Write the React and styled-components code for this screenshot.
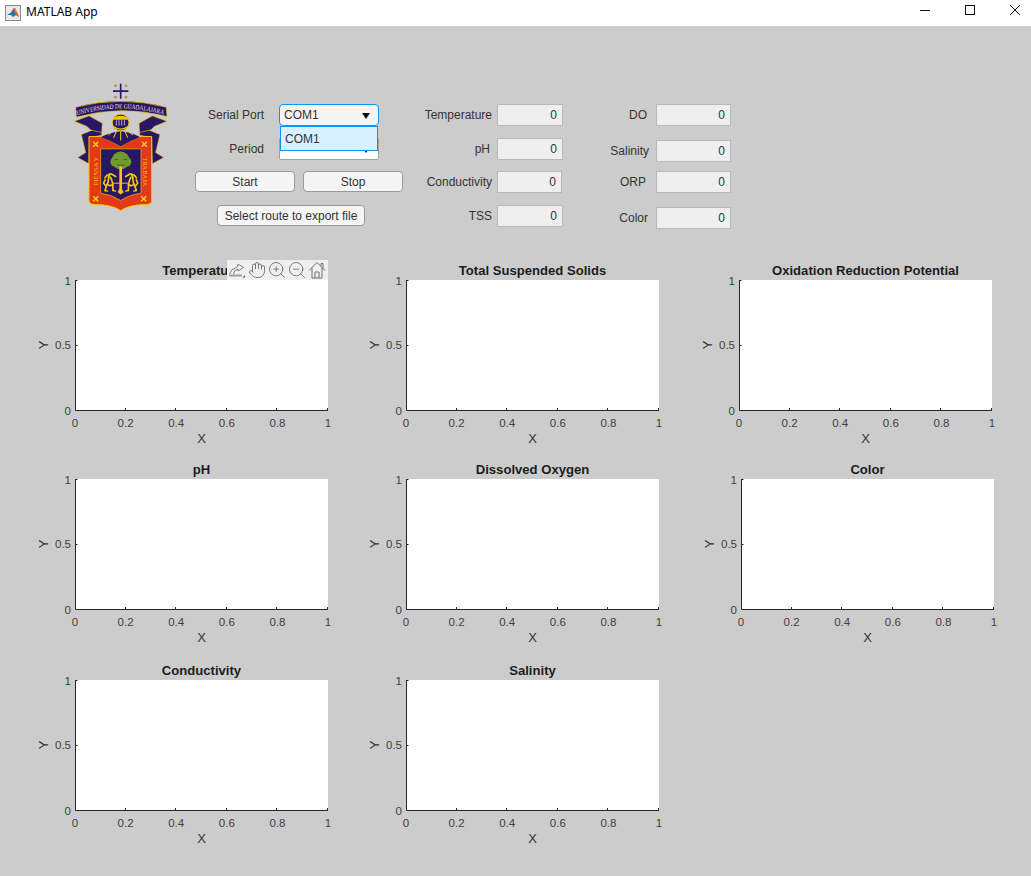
import styled, { createGlobalStyle } from "styled-components";
import { Hand, ZoomIn, ZoomOut } from "lucide-react";

const GlobalStyle = createGlobalStyle`
    html, body {
        margin: 0;
        padding: 0;
        background: #cccccc;
    }
    * {
        box-sizing: border-box;
    }
`;

const Window = styled.div`
    width: 1031px;
    height: 876px;
    overflow: hidden;
    display: flex;
    flex-direction: column;
    font-family: "Liberation Sans", Arial, sans-serif;
    font-size: 12px;
    color: #333333;
`;

const TitleBar = styled.div`
    height: 26px;
    flex: none;
    background: #ffffff;
    display: flex;
    align-items: center;
    padding-left: 5px;
`;

const AppName = styled.span`
    margin-left: 5px;
    font-family: "Noto Sans", sans-serif;
    font-size: 12px;
    color: #000000;
    margin-top: -3px;
`;

const WindowButtons = styled.div`
    margin-left: auto;
    margin-right: -6px;
    display: flex;
`;

const WindowButton = styled.div`
    width: 45px;
    height: 26px;
    display: flex;
    align-items: center;
    justify-content: center;
    padding-bottom: 6px;
`;

const Figure = styled.div`
    flex: 1;
    background: #cccccc;
    display: flex;
    flex-direction: column;
`;

const Header = styled.div`
    height: 234px;
    flex: none;
    padding: 57px 0 0 73px;
    display: flex;
    align-items: flex-start;
`;

const Logo = styled.svg`
    flex: none;
    width: 95px;
    height: 129px;
`;

const Controls = styled.div`
    width: 208px;
    margin: 21px 0 0 27px;
    display: flex;
    flex-direction: column;
`;

const SelectRow = styled.div`
    display: flex;
    align-items: center;
    height: 22px;
    margin-top: ${(p) => p.$top || 0}px;
`;

const ControlLabel = styled.span`
    width: 69px;
    margin-right: 15px;
    text-align: right;
`;

const SelectBox = styled.div`
    position: relative;
    width: 100px;
    height: 22px;
    padding-left: 4px;
    display: flex;
    align-items: center;
    background: ${(p) => (p.$open ? "#f5f5f5" : "#ffffff")};
    border: 1px solid ${(p) => (p.$open ? "#0a95f5" : "#a0a0a0")};
    border-radius: ${(p) => (p.$open ? "4px" : "0 0 2px 2px")};
    &::after {
        content: "";
        position: absolute;
        right: 8px;
        top: 8px;
        border-left: 4px solid transparent;
        border-right: 4px solid transparent;
        border-top: 6px solid #111111;
    }
`;

const DropList = styled.div`
    position: absolute;
    z-index: 2;
    left: 0;
    top: 21px;
    width: 98px;
    height: 25px;
    padding-left: 4px;
    display: flex;
    align-items: center;
    background: #d9f0ff;
    border: 1.5px solid #0a95f5;
`;

const ButtonRow = styled.div`
    display: flex;
    gap: 8px;
    margin-top: 11px;
`;

const PushButton = styled.button`
    width: ${(p) => p.$width}px;
    height: 21px;
    margin: 0;
    margin-left: ${(p) => p.$left || 0}px;
    margin-top: ${(p) => p.$top || 0}px;
    padding: 0;
    background: #f5f5f5;
    border: 1px solid #9a9a9a;
    border-radius: 4px;
    font: inherit;
    color: #333333;
`;

const Readings = styled.div`
    width: ${(p) => p.$width}px;
    margin-top: 21px;
    display: flex;
    flex-direction: column;
    align-items: flex-end;
`;

const Reading = styled.div`
    display: flex;
    align-items: center;
    height: 22px;
    gap: ${(p) => p.$gap}px;
    margin-top: ${(p) => p.$top}px;
`;

const ReadingBox = styled.div`
    width: ${(p) => p.$width}px;
    height: 22px;
    margin-right: ${(p) => p.$trim || 0}px;
    padding-right: 5px;
    display: flex;
    align-items: center;
    justify-content: flex-end;
    background: #efefef;
    border: 1px solid #b8b8b8;
`;

const Charts = styled.div`
    display: flex;
    flex-direction: column;
    padding-left: 35px;
`;

const ChartRow = styled.div`
    display: flex;
    margin-top: ${(p) => p.$top}px;
`;

const Chart = styled.div`
    position: relative;
    flex: none;
    width: ${(p) => p.$width}px;
    height: 190px;
    padding-left: ${(p) => p.$shift || 0}px;
`;

const ChartCanvas = styled.svg`
    display: block;
`;

const ChartTitle = styled.text`
    font-family: "Liberation Sans", Arial, sans-serif;
    font-size: 13.1px;
    font-weight: 700;
    fill: #1c1c1c;
    text-anchor: middle;
`;

const TickText = styled.text`
    font-family: "Liberation Sans", Arial, sans-serif;
    font-size: 11.5px;
    fill: #404040;
    text-anchor: ${(p) => p.$anchor || "middle"};
`;

const AxisName = styled.text`
    font-family: "Liberation Sans", Arial, sans-serif;
    font-size: 13px;
    fill: #333333;
    text-anchor: middle;
`;

const AxesToolbar = styled.div`
    position: absolute;
    left: 192px;
    top: 0;
    width: 101px;
    height: 20px;
    display: flex;
    align-items: center;
    background: #efefef;
    color: #666666;
`;

const ToolSlot = styled.span`
    width: 20px;
    height: 20px;
    display: flex;
    align-items: center;
    justify-content: center;
`;

const plotWidth = 253;
const plotHeight = 130;
const originX = 40;
const originY = 20;
const ticks = ["0", "0.2", "0.4", "0.6", "0.8", "1"];

const navy = "#2a1763";
const gold = "#f4c417";

function MatlabIcon() {
    return (
        <svg width="16" height="16" viewBox="0 0 16 16">
            <rect x="0.5" y="0.5" width="15" height="15" fill="#e8e8e8" stroke="#8c8c8c" />
            <path d="M2 10 L6 7.5 L8 4 L10 3 L14 12 L11 10 L8 12 L6 10 Z" fill="#2f6fb5" />
            <path d="M8 4 L10 3 L14 12 L11 10 L9.5 7 Z" fill="#e2592a" />
            <path d="M9.5 3.5 L10.5 3.5 L13 9 L11 7 Z" fill="#f5a030" />
        </svg>
    );
}

function Wing() {
    return (
        <g fill={navy} stroke="#f2c200" strokeWidth="1.8">
            <path d="M245 402 L270 392 L306 376 L306 404 L270 412 L268 490 L234 471 L258 456 Z" />
            <path d="M224 362 L268 346 L308 368 L306 396 L272 388 L262 378 Z" />
        </g>
    );
}

function GoldCross({ x, y }) {
    return (
        <path
            d={`M${x - 9} ${y - 7} L${x - 6} ${y - 9} L${x} ${y - 3} L${x + 6} ${y - 9} L${x + 9} ${y - 6} L${x + 3} ${y} L${x + 9} ${y + 6} L${x + 6} ${y + 9} L${x} ${y + 3} L${x - 6} ${y + 9} L${x - 9} ${y + 6} L${x - 3} ${y} Z`}
            fill="#f7d21a"
        />
    );
}

function Lion() {
    return (
        <g fill="none" stroke={gold} strokeWidth="5" strokeLinecap="round" strokeLinejoin="round">
            <path d="M348 528 L334 520 L322 524 L316 532" />
            <path d="M330 522 C322 535 330 542 322 552 L316 570" />
            <path d="M332 530 C340 540 340 552 340 570" />
            <path d="M322 552 L332 556 L340 552" />
            <path d="M316 538 L312 548 L318 556" />
            <path d="M340 570 L348 572" strokeWidth="4" />
            <path d="M316 570 L324 572" strokeWidth="4" />
        </g>
    );
}

function UniversityLogo() {
    return (
        <Logo viewBox="220 248 285 386">
            <defs>
                <path id="bannerArc" d="M233 344 Q363 304 497 344" />
            </defs>
            <path d="M363 250 V295 M340 272 H386" stroke={navy} strokeWidth="5" fill="none" />
            <g fill="#a8924a">
                <circle cx="347" cy="256" r="4" />
                <circle cx="379" cy="256" r="4" />
                <circle cx="347" cy="290" r="4" />
                <circle cx="379" cy="290" r="4" />
            </g>
            <Wing />
            <g transform="translate(726 0) scale(-1 1)">
                <Wing />
            </g>
            <path
                d="M228 320 Q363 285 500 320 L502 348 Q363 312 230 350 Z"
                fill={navy}
                stroke="#f2c200"
                strokeWidth="2"
            />
            <text fill="#e4e0f0" fontFamily="Liberation Serif, serif" fontSize="20">
                <textPath href="#bannerArc" textLength="262" lengthAdjust="spacingAndGlyphs">
                    UNIVERSIDAD DE GUADALAJARA
                </textPath>
            </text>
            <path
                d="M268 408 H300 Q340 420 363 438 Q386 420 426 408 H456 V600 Q456 612 440 612 Q390 612 363 630 Q336 612 286 612 Q268 612 268 600 Z"
                fill="#e2391b"
                stroke="#f7c600"
                strokeWidth="3"
            />
            <path d="M303 410 Q330 395 363 392 Q396 395 422 410 Q390 420 363 438 Q336 420 303 410 Z" fill={navy} />
            <path
                d="M363 392 V420 M350 392 L342 412 M376 392 L384 412 M340 392 L326 404 M386 392 L400 404"
                stroke="#f7d21a"
                strokeWidth="3"
            />
            <circle cx="363" cy="366" r="25" fill={navy} stroke={gold} strokeWidth="3" />
            <path d="M340 352 Q363 340 386 352 L386 358 H340 Z" fill={gold} />
            <path d="M341 376 Q363 392 385 376 L385 380 Q363 396 341 380 Z" fill={gold} />
            <path d="M350 359 V375 M358 359 V375 M366 359 V375 M374 359 V375" stroke="#c9c9d8" strokeWidth="2.5" />
            <path d="M303 445 H424 V578 Q390 582 363 600 Q336 582 303 578 Z" fill={navy} stroke="#f7c600" strokeWidth="2" />
            <g fill="#6f9a2e">
                <circle cx="363" cy="480" r="27" />
                <circle cx="346" cy="484" r="14" />
                <circle cx="381" cy="484" r="14" />
            </g>
            <path d="M345 477 H355 M372 477 H382 M352 494 H374" stroke="#2f4f1a" strokeWidth="2" />
            <path d="M359 498 L367 498 L367 565 L372 575 L363 582 L354 575 L359 565 Z" fill={gold} />
            <path d="M340 548 H388" stroke={gold} strokeWidth="3" />
            <Lion />
            <g transform="translate(726 0) scale(-1 1)">
                <Lion />
            </g>
            <GoldCross x={288} y={431} />
            <GoldCross x={434} y={431} />
            <GoldCross x={288} y={595} />
            <GoldCross x={432} y={595} />
            <text transform="translate(295 555) rotate(-90)" fill="#f7c600" fontFamily="Liberation Serif, serif" fontSize="18" textLength="86" lengthAdjust="spacingAndGlyphs">
                PIENSA Y
            </text>
            <text transform="translate(431 470) rotate(90)" fill="#f7c600" fontFamily="Liberation Serif, serif" fontSize="18" textLength="88" lengthAdjust="spacingAndGlyphs">
                TRABAJA
            </text>
        </Logo>
    );
}

function ExportIcon() {
    return (
        <svg width="18" height="18" viewBox="0 0 18 18" fill="none" stroke="#808080" strokeWidth="1">
            <path d="M1.5 13 L4 8.5 L7 7.5 L10 5 V3 L15.5 6.5 L10 10 V8 L6.5 10 L5.5 13" />
            <path d="M1 14.5 H14" strokeWidth="2" stroke="#a0a0a0" />
            <path d="M14.5 16.5 L17 16.5 L17 14 Z" fill="#555555" stroke="none" />
        </svg>
    );
}

function HomeIcon() {
    return (
        <svg width="18" height="18" viewBox="0 0 18 18" fill="none" stroke="#6e6e6e" strokeWidth="1">
            <path d="M1 9.5 L9 1.5 L17 9.5" />
            <path d="M4 7 V17 H14 V7" />
            <path d="M7 17 V11 H11 V17" />
            <path d="M13 5 V2.5 H15 V7.5" />
        </svg>
    );
}

function Axes({ title, toolbar }) {
    const left = originX;
    const bottom = originY + plotHeight;
    const step = plotWidth / 5;
    return (
        <>
            <ChartCanvas width="300" height="190">
                <ChartTitle x={originX + plotWidth / 2} y="14.5">{title}</ChartTitle>
                <rect x={left} y={originY} width={plotWidth} height={plotHeight} fill="#ffffff" />
                <path
                    d={`M${left + 0.5} ${originY} V${bottom + 0.5} H${left + plotWidth}`}
                    fill="none"
                    stroke="#262626"
                />
                <path
                    d={`M${left} ${originY + 0.5} H${left + 2.5} M${left} ${originY + 65.5} H${left + 2.5}`}
                    stroke="#262626"
                />
                {ticks.slice(1).map((t, i) => {
                    const x = Math.round(left + step * (i + 1)) - 0.5;
                    return <path key={t} d={`M${x} ${bottom} V${bottom - 2}`} stroke="#262626" />;
                })}
                <TickText x={left - 4} y={originY + 5} $anchor="end">1</TickText>
                <TickText x={left - 4} y={originY + 69} $anchor="end">0.5</TickText>
                <TickText x={left - 4} y={bottom + 5} $anchor="end">0</TickText>
                {ticks.map((t, i) => (
                    <TickText key={t} x={left + step * i} y={bottom + 17}>{t}</TickText>
                ))}
                <AxisName x={originX + plotWidth / 2} y={bottom + 33}>X</AxisName>
                <AxisName transform={`translate(12.5 ${originY + 65}) rotate(-90)`}>Y</AxisName>
            </ChartCanvas>
            {toolbar && (
                <AxesToolbar>
                    <ToolSlot><ExportIcon /></ToolSlot>
                    <ToolSlot><Hand size={18} strokeWidth={1.1} /></ToolSlot>
                    <ToolSlot><ZoomIn size={20} strokeWidth={1} /></ToolSlot>
                    <ToolSlot><ZoomOut size={20} strokeWidth={1} /></ToolSlot>
                    <ToolSlot><HomeIcon /></ToolSlot>
                </AxesToolbar>
            )}
        </>
    );
}

const chartRows = [
    {
        top: 0,
        charts: [
            { title: "Temperature", width: 331, toolbar: true },
            { title: "Total Suspended Solids", width: 333 },
            { title: "Oxidation Reduction Potential", width: 300 },
        ],
    },
    {
        top: 9,
        charts: [
            { title: "pH", width: 331 },
            { title: "Dissolved Oxygen", width: 333 },
            { title: "Color", width: 302, shift: 2 },
        ],
    },
    {
        top: 11,
        charts: [
            { title: "Conductivity", width: 331 },
            { title: "Salinity", width: 333 },
        ],
    },
];

const leftReadings = [
    { label: "Temperature", gap: 5, top: 0, width: 66 },
    { label: "pH", gap: 7, top: 12, width: 66 },
    { label: "Conductivity", gap: 5, top: 11, width: 65, trim: 1 },
    { label: "TSS", gap: 5, top: 12, width: 66 },
];

const rightReadings = [
    { label: "DO", gap: 9, top: 0 },
    { label: "Salinity", gap: 7, top: 14 },
    { label: "ORP", gap: 10, top: 9 },
    { label: "Color", gap: 8, top: 14 },
];

export default function App() {
    return (
        <Window>
            <GlobalStyle />
            <TitleBar>
                <MatlabIcon />
                <AppName>MATLAB App</AppName>
                <WindowButtons>
                    <WindowButton>
                        <svg width="12" height="12"><path d="M1 6.5 H11" stroke="#111111" /></svg>
                    </WindowButton>
                    <WindowButton>
                        <svg width="12" height="12"><rect x="1.5" y="1.5" width="9" height="9" fill="none" stroke="#111111" /></svg>
                    </WindowButton>
                    <WindowButton>
                        <svg width="12" height="12"><path d="M1 1 L11 11 M11 1 L1 11" stroke="#111111" /></svg>
                    </WindowButton>
                </WindowButtons>
            </TitleBar>
            <Figure>
                <Header>
                    <UniversityLogo />
                    <Controls>
                        <SelectRow>
                            <ControlLabel>Serial Port</ControlLabel>
                            <SelectBox $open>
                                COM1
                                <DropList>COM1</DropList>
                            </SelectBox>
                        </SelectRow>
                        <SelectRow $top={12}>
                            <ControlLabel>Period</ControlLabel>
                            <SelectBox />
                        </SelectRow>
                        <ButtonRow>
                            <PushButton $width={100}>Start</PushButton>
                            <PushButton $width={100}>Stop</PushButton>
                        </ButtonRow>
                        <PushButton $width={148} $left={22} $top={13}>Select route to export file</PushButton>
                    </Controls>
                    <Readings $width={160}>
                        {leftReadings.map((r) => (
                            <Reading key={r.label} $gap={r.gap} $top={r.top}>
                                {r.label}
                                <ReadingBox $width={r.width} $trim={r.trim}>0</ReadingBox>
                            </Reading>
                        ))}
                    </Readings>
                    <Readings $width={168}>
                        {rightReadings.map((r) => (
                            <Reading key={r.label} $gap={r.gap} $top={r.top}>
                                {r.label}
                                <ReadingBox $width={75}>0</ReadingBox>
                            </Reading>
                        ))}
                    </Readings>
                </Header>
                <Charts>
                    {chartRows.map((row) => (
                        <ChartRow key={row.charts[0].title} $top={row.top}>
                            {row.charts.map((c) => (
                                <Chart key={c.title} $width={c.width} $shift={c.shift}>
                                    <Axes title={c.title} toolbar={c.toolbar} />
                                </Chart>
                            ))}
                        </ChartRow>
                    ))}
                </Charts>
            </Figure>
        </Window>
    );
}
